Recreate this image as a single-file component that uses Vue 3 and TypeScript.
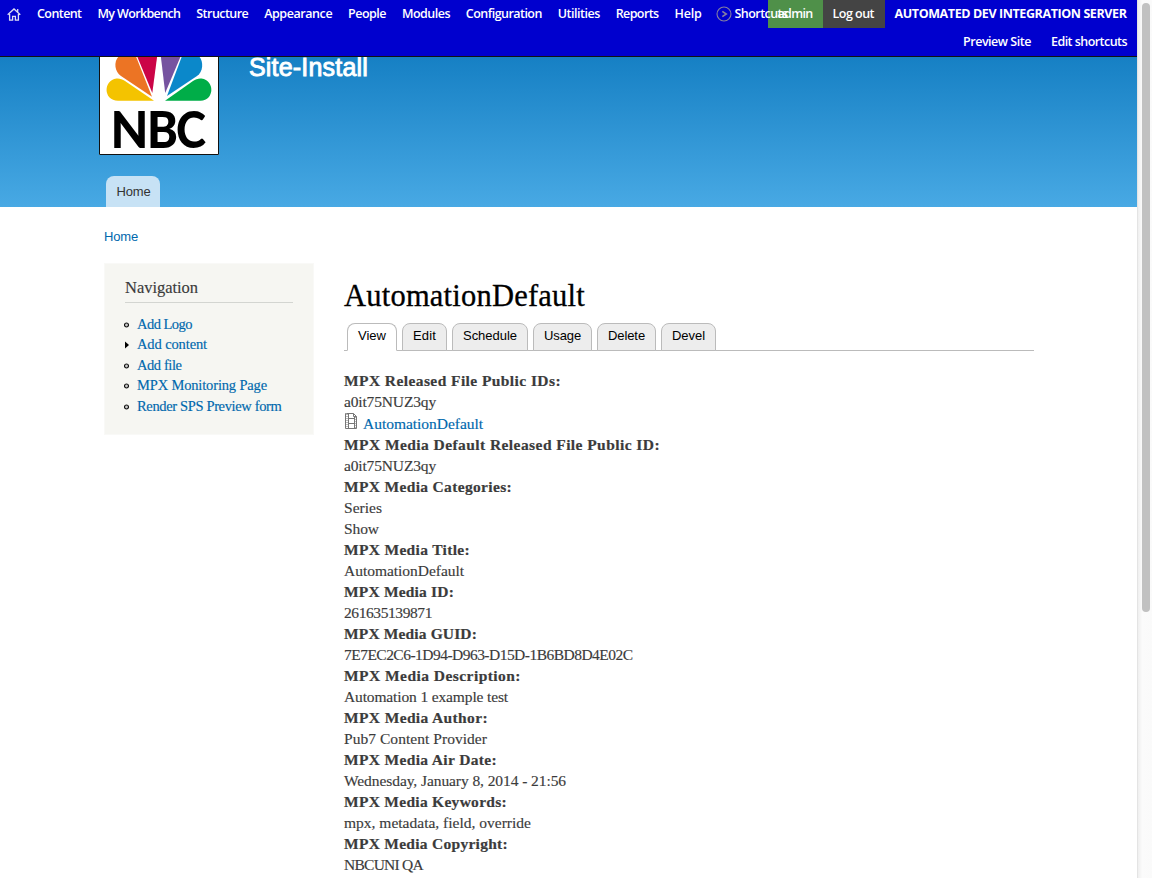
<script setup lang="ts">
interface Label { text: string; w: number }
interface Row extends Label { kind: 'label' | 'value' | 'file' }

// Tracks text out (or in) so that it fills the given width.
const vFit = {
  mounted(el: HTMLElement, binding: { value: number }) {
    const natural = el.getBoundingClientRect().width
    const count = (el.textContent ?? '').length
    el.style.letterSpacing = `${(binding.value - natural) / count}px`
  },
}

const menu: Label[] = [
  { text: 'Content', w: 44.5 },
  { text: 'My Workbench', w: 83 },
  { text: 'Structure', w: 52 },
  { text: 'Appearance', w: 68 },
  { text: 'People', w: 38 },
  { text: 'Modules', w: 48 },
  { text: 'Configuration', w: 76 },
  { text: 'Utilities', w: 42 },
  { text: 'Reports', w: 43 },
  { text: 'Help', w: 27 },
]

const navigation: (Label & { open?: boolean })[] = [
  { text: 'Add Logo', w: 55 },
  { text: 'Add content', w: 70, open: true },
  { text: 'Add file', w: 44.5 },
  { text: 'MPX Monitoring Page', w: 130 },
  { text: 'Render SPS Preview form', w: 144.5 },
]

const tabs: Label[] = [
  { text: 'View', w: 28 },
  { text: 'Edit', w: 23 },
  { text: 'Schedule', w: 54 },
  { text: 'Usage', w: 37 },
  { text: 'Delete', w: 37 },
  { text: 'Devel', w: 33 },
]

const rows: Row[] = [
  { kind: 'label', text: 'MPX Released File Public IDs:', w: 217 },
  { kind: 'value', text: 'a0it75NUZ3qy', w: 92 },
  { kind: 'file', text: 'AutomationDefault', w: 120 },
  { kind: 'label', text: 'MPX Media Default Released File Public ID:', w: 316 },
  { kind: 'value', text: 'a0it75NUZ3qy', w: 92 },
  { kind: 'label', text: 'MPX Media Categories:', w: 168 },
  { kind: 'value', text: 'Series', w: 38 },
  { kind: 'value', text: 'Show', w: 35 },
  { kind: 'label', text: 'MPX Media Title:', w: 126 },
  { kind: 'value', text: 'AutomationDefault', w: 120 },
  { kind: 'label', text: 'MPX Media ID:', w: 110 },
  { kind: 'value', text: '261635139871', w: 88 },
  { kind: 'label', text: 'MPX Media GUID:', w: 133 },
  { kind: 'value', text: '7E7EC2C6-1D94-D963-D15D-1B6BD8D4E02C', w: 288.5 },
  { kind: 'label', text: 'MPX Media Description:', w: 177 },
  { kind: 'value', text: 'Automation 1 example test', w: 164 },
  { kind: 'label', text: 'MPX Media Author:', w: 144 },
  { kind: 'value', text: 'Pub7 Content Provider', w: 143 },
  { kind: 'label', text: 'MPX Media Air Date:', w: 153 },
  { kind: 'value', text: 'Wednesday, January 8, 2014 - 21:56', w: 222 },
  { kind: 'label', text: 'MPX Media Keywords:', w: 163 },
  { kind: 'value', text: 'mpx, metadata, field, override', w: 187 },
  { kind: 'label', text: 'MPX Media Copyright:', w: 164 },
  { kind: 'value', text: 'NBCUNI QA', w: 79 },
]
</script>

<template>
  <div class="window">
    <div class="page">
      <div class="toolbar">
        <div class="toolbar-main">
          <svg class="home" width="14" height="13" viewBox="0 0 14 13" fill="none" stroke="#dcdcf2" stroke-width="1.3">
            <path d="M.7 6.7 7 1l6.3 5.7M2.6 6v6.1h3V8.4h2.8v3.7h3V6M10.7 3.8V1.1" />
          </svg>
          <nav class="menu">
            <a v-for="m in menu" :key="m.text"><span v-fit="m.w">{{ m.text }}</span></a>
          </nav>
          <div class="shortcuts">
            <svg width="16" height="16" viewBox="0 0 16 16" fill="none" stroke="#8580a0">
              <circle cx="8" cy="8" r="7" stroke-width="1.1" />
              <path d="m6.3 5.3 4 2.7-4 2.7" stroke-width="1.6" />
            </svg>
            <span v-fit="53">Shortcuts</span>
          </div>
          <div class="user">
            <a class="admin"><span v-fit="35">admin</span></a>
            <a class="logout"><span v-fit="41.5">Log out</span></a>
            <strong><span v-fit="232">AUTOMATED DEV INTEGRATION SERVER</span></strong>
          </div>
        </div>
        <div class="toolbar-sub">
          <a><span v-fit="68">Preview Site</span></a>
          <a><span v-fit="76">Edit shortcuts</span></a>
        </div>
      </div>

      <header class="header">
        <div class="brand">
          <svg class="logo" width="120" height="98" viewBox="99 57 120 98">
            <path fill="#fff" d="M99 57h120v98H99z" />
            <path fill="#f4c300" d="M154 100.8h-36c-15 0-15-20.5-1.5-22.2 3-.3 6 .8 8.5 2.4z" />
            <path fill="#ec7424" d="M119 56c-6 6-4 16 2 20l31 20.8L135.800 56z" />
            <path fill="#cb0447" d="M137 56h20.200L152.300 93z" />
            <path fill="#7653a0" d="M160.800 56h20L165.200 93z" />
            <path fill="#0b88ca" d="M182 56h17c5 6 4 16-2 20l-30 20z" />
            <path fill="#00ad48" d="M165 100.800h35.500c14 0 14.500-20.500 1-22.200-3-.3-6 .8-8.500 2.400z" />
            <text y="147.5"><tspan x="110.5" textLength="38" lengthAdjust="spacingAndGlyphs">N</tspan><tspan x="147" textLength="31" lengthAdjust="spacingAndGlyphs">B</tspan><tspan x="176" textLength="30" lengthAdjust="spacingAndGlyphs">C</tspan></text>
            <path fill="none" stroke="#111" d="M99.500 56v98.500h119V56" />
          </svg>
          <h2><span v-fit="119">Site-Install</span></h2>
        </div>
        <a class="main-tab"><span v-fit="34">Home</span></a>
      </header>

      <div class="crumb"><a><span v-fit="34">Home</span></a></div>

      <div class="columns">
        <aside class="sidebar">
          <h3><span v-fit="73">Navigation</span></h3>
          <ul>
            <li v-for="n in navigation" :key="n.text">
              <svg width="6" height="8" viewBox="0 0 6 8">
                <path v-if="n.open" d="M1 .5 5 4 1 7.500z" fill="#000" />
                <circle v-else cx="2.500" cy="4" r="2" fill="#ccc" stroke="#111" stroke-width="1.200" />
              </svg>
              <a><span v-fit="n.w">{{ n.text }}</span></a>
            </li>
          </ul>
        </aside>

        <main class="content">
          <h1><span v-fit="241">AutomationDefault</span></h1>
          <div class="tabs">
            <a v-for="(t, i) in tabs" :key="t.text" :class="{ active: i === 0 }"><span v-fit="t.w">{{ t.text }}</span></a>
          </div>
          <div class="fields">
            <div v-for="(r, i) in rows" :key="i" :class="r.kind">
              <svg v-if="r.kind === 'file'" width="14" height="17" viewBox="0 0 14 17" fill="none" stroke="#777">
                <path d="M2.500.5h7l3 3v12h-11v-15zM9.500.5v3h3M4.500 1v14M10.500 4v11M4.500 5.500h6M4.500 10.500h6" />
                <path d="M3 1v14M12 4v11" stroke-dasharray="1 1" />
              </svg>
              <span v-fit="r.w">{{ r.text }}</span>
            </div>
          </div>
        </main>
      </div>
    </div>
    <div class="scrollbar"><div class="thumb"></div></div>
  </div>
</template>

<style>
html, body { overflow: hidden; background: #fff; }
</style>

<style scoped>
.window { display: flex; width: 1152px; height: 878px; overflow: hidden; color: #3b3b3b; font-family: "Liberation Serif", Georgia, serif; }
.window * { box-sizing: border-box; }
span { white-space: pre; }
.page { width: 1137px; height: 878px; overflow: hidden; }
.toolbar { position: relative; z-index: 2; height: 57px; background: #0000ce; border-bottom: 1px solid #111; color: #fff; font: 600 12.5px/28px "Open Sans", sans-serif; }
.toolbar-main { display: flex; height: 28px; padding-left: 7px; }
.home { margin: 8px 16px 0 0; flex: none; }
.menu { display: flex; gap: 15.9px; }
.shortcuts { display: flex; width: 52px; margin-left: 14px; gap: 4px; align-items: center; position: relative; z-index: 1; white-space: nowrap; }
.shortcuts svg { flex: none; margin-right: -1px; }
.user { display: flex; margin-left: auto; }
.user a { padding: 0 10px; height: 28px; }
.admin { background: #4f9049; width: 55px; }
.logout { background: #444; width: 62px; }
.user strong { width: 252.5px; padding-left: 10px; font-weight: 700; }
.toolbar-sub { display: flex; justify-content: flex-end; gap: 20px; padding-right: 10px; }
.header { display: flex; flex-direction: column; justify-content: space-between; align-items: flex-start; height: 150px; background: linear-gradient(#1680c4, #48a9e4); font-family: "Liberation Sans", Arial, sans-serif; }
.brand { display: flex; margin-left: 99px; gap: 30px; }
.logo { display: block; overflow: visible; }
.logo text { font: 900 51px Lato, sans-serif; fill: #000; }
h2 { margin: -5px 0 0; font-size: 25px; line-height: 30px; font-weight: 400; color: #fff; -webkit-text-stroke: .9px #fff; }
.main-tab { margin-left: 106px; width: 54px; height: 31px; padding-left: 10.5px; border-radius: 8px 8px 0 0; background: #c7e2f5; color: #333; font-size: 13px; line-height: 31px; }
.crumb { height: 56px; padding: 20px 0 0 104px; font: 13px/20px "Liberation Sans", Arial, sans-serif; color: #0068ad; }
.columns { display: flex; align-items: flex-start; gap: 30px; padding-left: 104px; }
.sidebar { width: 210px; height: 172px; padding: 13px 20px 14px 21px; background: #f6f6f2; border: 1px solid #f9f9f7; }
h3 { margin: 0 0 11px -1px; height: 26px; border-bottom: 1px solid #d3d5d1; font-size: 16.5px; line-height: 21px; font-weight: 400; -webkit-text-stroke: .15px; }
ul { list-style: none; margin: 0 0 0 -2px; padding: 0; }
li { display: flex; align-items: center; gap: 8px; height: 20.5px; font-size: 14.5px; color: #0068ad; white-space: nowrap; -webkit-text-stroke: .15px; }
li svg { flex: none; margin-right: -1px; margin-top: 1px; }
.content { width: 690px; padding-top: 16px; }
h1 { margin: 0; height: 44px; font-size: 30.5px; line-height: 34px; font-weight: 400; color: #000; -webkit-text-stroke: .3px; }
.tabs { display: flex; gap: 5px; height: 28px; padding-left: 3px; border-bottom: 1px solid #bbb; font: 13px/24px "Liberation Sans", Arial, sans-serif; color: #000; }
.tabs a { height: 28px; padding: 0 10px; border: 1px solid #bbb; border-radius: 8px 8px 0 0; background: #ededed; }
.tabs .active { background: #fff; border-bottom-color: #fff; }
.fields { padding-top: 19px; font-size: 15.5px; }
.label, .value { height: 21px; line-height: 21px; }
.value, .file { -webkit-text-stroke: .15px; }
.label { font-weight: 700; -webkit-text-stroke: .2px; }
.file { display: flex; height: 22px; line-height: 23px; gap: 5px; color: #0068ad; }
.file svg { margin-top: 1px; }
.scrollbar { width: 15px; height: 878px; padding: 3px 2px 0 4px; background: linear-gradient(90deg, #efefef, #fbfbfb 30%, #fafafa); border-left: 1px solid #e4e4e4; }
.thumb { width: 8px; height: 609px; border-radius: 4px; background: #c1c1c1; }
</style>
